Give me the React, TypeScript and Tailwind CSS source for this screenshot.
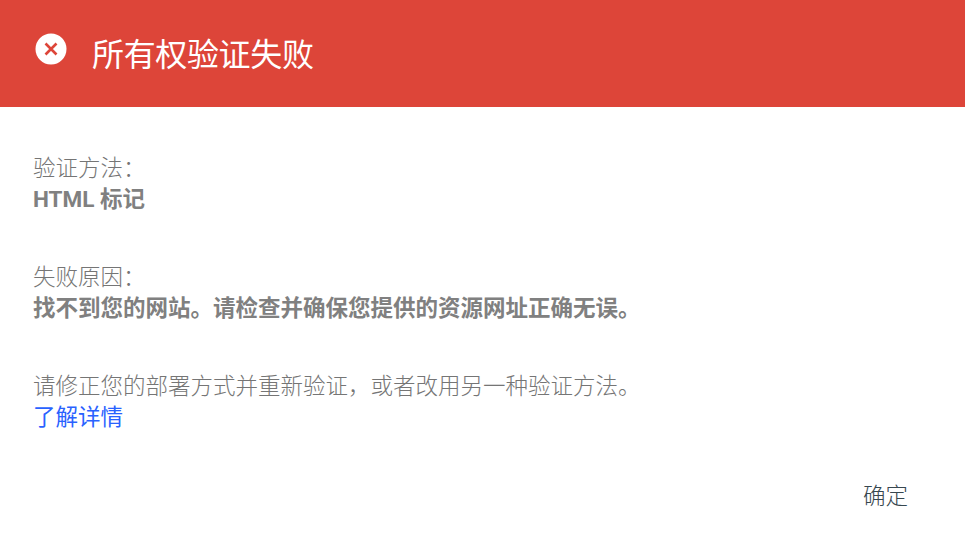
export default function App() {
  return (
    <div className="w-[965px] h-[543px] bg-white overflow-hidden font-['Roboto','Noto_Sans_CJK_SC',sans-serif]">
      <div className="h-[107px] bg-[#dd4539] flex items-center pl-[35px]">
        <svg width="32" height="32" viewBox="0 0 32 32" className="mb-[9px]">
          <circle cx="16" cy="16" r="15.5" fill="#fff" />
          <path d="M10.5 10.5 L21.5 21.5 M21.5 10.5 L10.5 21.5" stroke="#dd4539" strokeWidth="2.6" />
        </svg>
        <div className="ml-[25px] mt-[2px] text-[32px] leading-[40px] text-white tracking-[-0.35px] font-normal">所有权验证失败</div>
      </div>
      <div className="pl-[33px] pt-[47px] text-[22.5px] leading-[30px] text-[#757575] font-light">
        <div className="mt-[-1px] mb-[1px]">验证方法：</div>
        <div className="font-bold text-[#808080]">HTML 标记</div>
        <div className="mt-[48px] mb-[1px]">失败原因：</div>
        <div className="font-bold text-[#808080]">找不到您的网站。请检查并确保您提供的资源网址正确无误。</div>
        <div className="mt-[48px] mb-[1px]">请修正您的部署方式并重新验证，或者改用另一种验证方法。</div>
        <div className="text-[#2962ff] font-normal">了解详情</div>
      </div>
      <div className="flex justify-end pr-[57px] mt-[49px]">
        <span className="text-[22.5px] leading-[30px] text-[#37474f] font-light">确定</span>
      </div>
    </div>
  );
}
